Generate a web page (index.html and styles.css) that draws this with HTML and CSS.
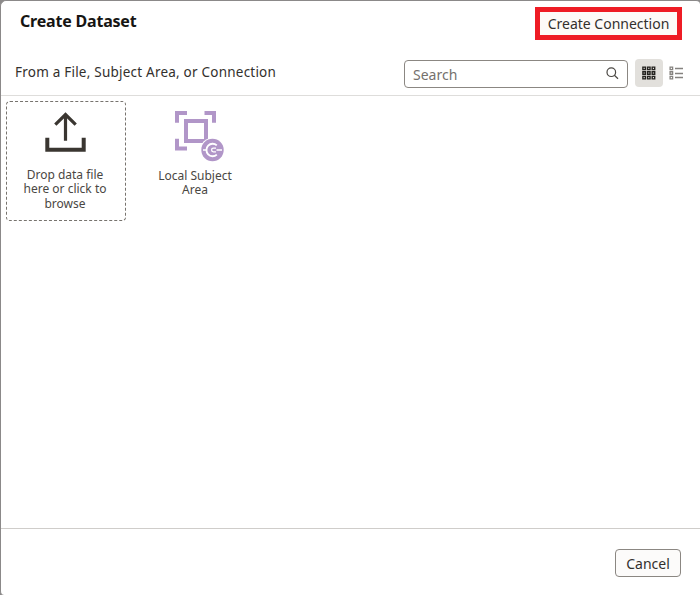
FILE: index.html
```
<!DOCTYPE html>
<html lang="en">
<head>
<meta charset="utf-8">
<title>Create Dataset</title>
<link rel="stylesheet" href="styles.css">
</head>
<body>
<main class="dialog">
  <header class="title-bar">
    <h1 class="title">Create Dataset</h1>
    <button class="create-connection">Create Connection</button>
  </header>
  <section class="toolbar">
    <h2 class="subtitle">From a File, Subject Area, or Connection</h2>
    <div class="search">
      <span class="placeholder">Search</span>
      <svg width="14" height="14" viewBox="0 0 14 14" fill="none" stroke="#4a4743" stroke-width="1.2"><circle cx="6.3" cy="6.2" r="4.3"/><path d="M9.4 9.3 13 12.7"/></svg>
    </div>
    <button class="view view-active" aria-label="Grid view">
      <svg width="14" height="14" viewBox="0 0 14 14" fill="none" stroke="#24221f" stroke-width="1.4"><path d="M.9 1.1h2.5v2.5H.9zM5.55 1.1h2.5v2.5h-2.5zM10.2 1.1h2.5v2.5h-2.5zM.9 5.75h2.5v2.5H.9zM5.55 5.75h2.5v2.5h-2.5zM10.2 5.75h2.5v2.5h-2.5zM.9 10.4h2.5v2.5H.9zM5.55 10.4h2.5v2.5h-2.5zM10.2 10.4h2.5v2.5h-2.5z"/></svg>
    </button>
    <button class="view view-list" aria-label="List view">
      <svg width="14" height="14" viewBox="0 0 14 14" fill="none" stroke="#85827f" stroke-width="1.3"><path d="M1.1 1.1h2.5v2.5H1.1zM1.1 5.75h2.5v2.5H1.1zM1.1 10.4h2.5v2.5H1.1zM6 2.5h8M6 7.5h8M6 11.5h8"/></svg>
    </button>
  </section>
  <section class="tiles">
    <div class="tile drop">
      <svg class="tile-icon" width="52" height="52" viewBox="0 0 52 52" fill="none" stroke="#3a3631"><path stroke-width="3.2" d="M26.5 33.7V7.5M16.3 17.6 26.5 7.5l10.2 10.1"/><path stroke-width="4" d="M8.3 30.7v12h36.4v-12"/></svg>
      <span class="label">Drop data file<br>here or click to<br>browse</span>
    </div>
    <div class="tile subject">
      <svg class="tile-icon" width="52" height="52" viewBox="0 0 52 52" fill="none" stroke="#b196c8" stroke-width="4"><path d="M8 15.7V6h10M35.5 6H45v9.7M8 31.7V41.5h10"/><path d="M17 14h20v20H17z"/><circle cx="43.5" cy="43" r="12.2" fill="#fff" stroke="none"/><circle cx="43.5" cy="43" r="11.2" fill="#b196c8" stroke="none"/><path stroke="#fff" stroke-width="1.9" d="M47.8 38.4A6.2 6.2 0 1 0 47.8 47.6"/><path stroke="#fff" stroke-width="1.5" d="M34 43h4"/><path stroke="#fff" stroke-width="1.3" d="M47 41.2h-2.6a1.8 1.8 0 0 0 0 3.6H47M47.5 43h5.5"/></svg>
      <span class="label">Local Subject<br>Area</span>
    </div>
  </section>
  <footer class="footer"><button class="cancel">Cancel</button></footer>
</main>
</body>
</html>
```
FILE: styles.css
```
* { box-sizing: border-box; }
body {
  margin: 0;
  background: #8b8989;
  font-family: "Noto Sans", sans-serif;
  color: #33302d;
}
button { font: inherit; color: inherit; margin: 0; padding: 0; }
.dialog {
  display: flex;
  flex-direction: column;
  width: 700px;
  height: 595px;
  border: solid #8b8989;
  border-width: 1px 0 0 1px;
  border-radius: 6px 4px 0 4px;
  background: #fff;
}
.title-bar {
  display: flex;
  justify-content: space-between;
  height: 50px;
  padding: 6px 18px 0 19px;
}
.title {
  margin: 3px 0 0;
  font-size: 16px;
  line-height: 22px;
  font-weight: 700;
  color: #161513;
  letter-spacing: -0.2px;
}
.create-connection {
  width: 147px;
  height: 33px;
  border: 5px solid #ee1c25;
  background: #fdfaf8;
  font-size: 14px;
  line-height: 22px;
}
.toolbar {
  display: flex;
  align-items: flex-start;
  height: 45px;
  padding: 8px 9px 0 14px;
  border-bottom: 1px solid #dedddb;
}
.subtitle {
  flex: 1;
  margin: 3px 0 0;
  font-size: 13.5px;
  line-height: 20px;
  font-weight: 400;
  letter-spacing: 0.22px;
}
.search {
  display: flex;
  justify-content: space-between;
  width: 224px;
  height: 28px;
  margin: 1px 7px 0 0;
  padding: 5px 8px 0;
  border: 1px solid #8b8782;
  border-radius: 4px;
}
.placeholder { font-size: 14px; line-height: 18px; color: #75716d; }
.view {
  display: flex;
  align-items: center;
  justify-content: center;
  width: 28px;
  height: 28px;
  border: 0;
  border-radius: 4px;
  background: none;
}
.view-active { background: #e2e0dc; }
.view-list { padding-right: 2px; }
.tiles {
  display: flex;
  flex: 1;
  gap: 10px;
  padding: 5px;
}
.tile {
  display: flex;
  flex-direction: column;
  align-items: center;
  width: 120px;
  height: 120px;
  padding: 6px 2px 0 0;
  border-radius: 4px;
}
.drop { padding-top: 5px; border: 1px dashed #77736e; }
.tile-icon { overflow: visible; }
.label {
  margin-top: 9px;
  font-size: 12px;
  line-height: 14.4px;
  text-align: center;
  color: #4a4743;
}
.subject .label { margin-top: 10px; }
.footer {
  display: flex;
  justify-content: flex-end;
  height: 67px;
  padding: 20px 19px 0 0;
  border-top: 1px solid #cfcdca;
}
.cancel {
  width: 66px;
  height: 28px;
  border: 1px solid #8b8782;
  border-radius: 4px;
  background: #fcfbfa;
  font-size: 14px;
  line-height: 28px;
}
```
